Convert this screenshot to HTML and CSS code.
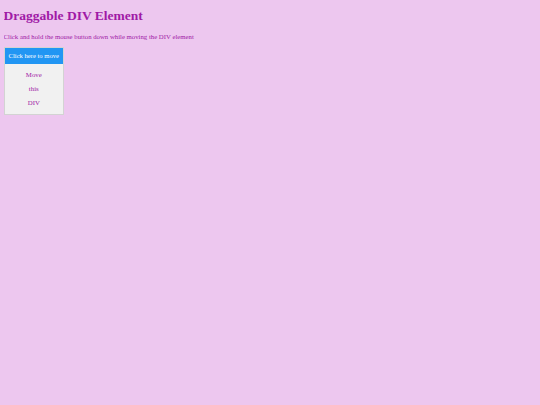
FILE: index.html
```html
<!DOCTYPE html>
<html>
<head>
<meta charset="utf-8">
<link rel="stylesheet" href="styles.css">
</head>
<body>
<h1 class="title">Draggable DIV Element</h1>
<p class="intro">Click and hold the mouse button down while moving the DIV element</p>
<div class="drag">
  <div class="drag-header">Click here to move</div>
  <p class="drag-line">Move</p>
  <p class="drag-line">this</p>
  <p class="drag-line">DIV</p>
</div>
</body>
</html>
```
FILE: styles.css
```css
html { background: #edc7ef; }
body {
  margin: 3.6px;
  font-family: "Liberation Serif", "Times New Roman", serif;
  color: #a01aa6;
}
.title {
  font-size: 13.5px;
  line-height: 15.5px;
  margin: 4.6px 0 8.9px;
  font-weight: bold;
}
.intro {
  font-size: 6.75px;
  line-height: 7.8px;
  margin: 6.8px 0 6.6px;
}
.drag {
  width: fit-content;
  background: #f1f1f1;
  border: 1px solid #d3d3d3;
  text-align: center;
  font-size: 6.8px;
  line-height: 7.8px;
}
.drag-header {
  padding: 4.3px 4px;
  background: #2196f3;
  color: #fff;
  font-size: 6.6px;
}
.drag-line {
  margin: 6.5px 0;
}
```
